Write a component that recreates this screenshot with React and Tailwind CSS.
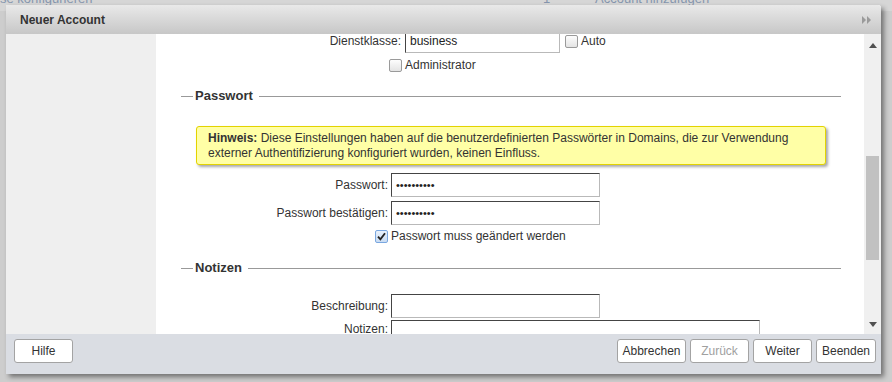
import React from "react";

const font = { fontFamily: '"Liberation Sans", Arial, sans-serif' };

function Box({ checked, className = "" }) {
  if (checked) {
    return (
      <span className={"inline-flex items-center justify-center w-[13px] h-[13px] rounded-[2px] border border-[#7aa7e0] bg-gradient-to-b from-[#e9f1fb] to-[#c9dcf3] shrink-0 " + className}>
        <svg width="9" height="9" viewBox="0 0 9 9">
          <path d="M1 4.6 L3.4 7.4 L8 1.2" stroke="#222" strokeWidth="1.8" fill="none" strokeLinejoin="miter" />
        </svg>
      </span>
    );
  }
  return (
    <span className={"inline-block w-[13px] h-[13px] rounded-[2px] border border-[#9a9a9a] bg-gradient-to-b from-[#fdfdfd] to-[#e4e4e4] shrink-0 " + className} />
  );
}

function Input({ w, children, h = "h-[24px]" }) {
  return (
    <div className={`${w} ${h} bg-white border border-t-[#444] border-l-[#444] border-b-[#b9b9b9] border-r-[#b9b9b9] flex items-center pl-[4px] text-[12px] text-[#222] shrink-0`}>
      {children}
    </div>
  );
}

function Legend({ title, className = "" }) {
  return (
    <div className={"flex items-center h-[16px] ml-[25px] mr-[23px] " + className}>
      <div className="w-[12px] h-px bg-[#999]" />
      <span className="ml-[2px] mr-[6px] text-[13px] font-bold text-[#333] leading-[16px]">{title}</span>
      <div className="flex-1 h-px bg-[#999]" />
    </div>
  );
}

function Btn({ children, w, disabled }) {
  return (
    <div className={`${w} h-[24px] rounded-[3px] border border-[#a3a3a3] bg-white flex items-center justify-center text-[12px] ${disabled ? "text-[#a0a0a0]" : "text-[#333]"}`}>
      {children}
    </div>
  );
}

export default function App() {
  const dots = "••••••••••";
  return (
    <div className="relative w-[892px] h-[382px] overflow-hidden bg-[#cdcdcd]" style={font}>
      {/* background page text */}
      <div className="flex h-[11px] pt-[0px] overflow-hidden bg-[#d6d6d6]">
        <div className="flex mt-[-9px] text-[13px] text-[#8595ad] leading-[15px] whitespace-nowrap">
          <span className="w-[543px]">se konfigurieren</span>
          <span className="w-[52px]">1</span>
          <span>Account hinzufügen</span>
        </div>
      </div>

      {/* dialog */}
      <div className="absolute left-[6px] top-[5px] w-[875px] h-[369px] flex flex-col bg-white shadow-[3px_3px_5px_rgba(0,0,0,0.45)] rounded-tr-[3px]">
        {/* header */}
        <div className="h-[29px] shrink-0 flex items-center justify-between bg-gradient-to-b from-[#e9e9e9] to-[#c7c7c7] rounded-tr-[3px]">
          <span className="ml-[14px] text-[12px] font-bold text-[#333]">Neuer Account</span>
          <svg width="10" height="8" viewBox="0 0 10 8" className="mr-[9px] mt-[1px]">
            <path d="M0 0 L4 4 L0 8 Z" fill="#9a9a9a" />
            <path d="M5 0 L9 4 L5 8 Z" fill="#9a9a9a" />
          </svg>
        </div>

        {/* body */}
        <div className="h-[300px] shrink-0 flex">
          <div className="w-[150px] bg-[#efefef] shrink-0" />
          <div className="w-[708px] overflow-hidden bg-white text-[12px] text-[#333]">
            <div className="mt-[-5px]">
              {/* Dienstklasse */}
              <div className="flex items-center h-[24px]">
                <div className="w-[245px] text-right">Dienstklasse:</div>
                <div className="ml-[4px]">
                  <Input w="w-[155px]">business</Input>
                </div>
                <Box className="ml-[5px]" />
                <span className="ml-[3px]">Auto</span>
              </div>
              {/* Administrator */}
              <div className="flex items-center h-[16px] mt-[4px] pl-[233px]">
                <Box />
                <span className="ml-[3px]">Administrator</span>
              </div>

              <Legend title="Passwort" className="mt-[15px]" />

              <div className="mt-[22px] ml-[40px] w-[630px] h-[39px] bg-[#ffffa6] border border-[#e3d300] rounded-[3px] shadow-[2px_2px_3px_rgba(0,0,0,0.35)] pl-[11px] pt-[4px] text-[12px] leading-[15px] text-[#333]">
                <b>Hinweis:</b> Diese Einstellungen haben auf die benutzerdefinierten Passwörter in Domains, die zur Verwendung
                <br />
                externer Authentifizierung konfiguriert wurden, keinen Einfluss.
              </div>

              <div className="flex items-center h-[24px] mt-[8px]">
                <div className="w-[232px] text-right">Passwort:</div>
                <div className="ml-[3px]">
                  <Input w="w-[209px]"><span className="text-[11px]">{dots}</span></Input>
                </div>
              </div>
              <div className="flex items-center h-[24px] mt-[4px]">
                <div className="w-[232px] text-right">Passwort bestätigen:</div>
                <div className="ml-[3px]">
                  <Input w="w-[209px]"><span className="text-[11px]">{dots}</span></Input>
                </div>
              </div>
              <div className="flex items-center h-[16px] mt-[3px] pl-[219px]">
                <Box checked />
                <span className="ml-[3px]">Passwort muss geändert werden</span>
              </div>

              <Legend title="Notizen" className="mt-[16px]" />

              <div className="flex items-center h-[24px] mt-[18px]">
                <div className="w-[232px] text-right">Beschreibung:</div>
                <div className="ml-[3px]">
                  <Input w="w-[209px]" />
                </div>
              </div>
              <div className="flex items-start mt-[2px]">
                <div className="w-[232px] text-right leading-[15px] mt-[2px]">Notizen:</div>
                <div className="ml-[3px]">
                  <Input w="w-[369px]" h="h-[50px]" />
                </div>
              </div>
            </div>
          </div>
          {/* scrollbar */}
          <div className="w-[17px] shrink-0 bg-[#f0f0f0] flex flex-col items-center">
            <svg width="8" height="5" viewBox="0 0 8 5" className="mt-[9px]">
              <path d="M0 5 L4 0 L8 5 Z" fill="#505050" />
            </svg>
            <div className="mt-[108px] w-[13px] h-[104px] bg-[#c1c1c1]" />
            <div className="flex-1" />
            <svg width="8" height="5" viewBox="0 0 8 5" className="mb-[7px]">
              <path d="M0 0 L8 0 L4 5 Z" fill="#505050" />
            </svg>
          </div>
        </div>

        {/* footer */}
        <div className="h-[40px] shrink-0 bg-[#dadde3] flex items-start pt-[5px] pl-[8px] pr-[5px]">
          <Btn w="w-[59px]">Hilfe</Btn>
          <div className="flex-1" />
          <div className="flex gap-[4px]">
            <Btn w="w-[69px]">Abbrechen</Btn>
            <Btn w="w-[59px]" disabled>Zurück</Btn>
            <Btn w="w-[59px]">Weiter</Btn>
            <Btn w="w-[60px]">Beenden</Btn>
          </div>
        </div>
      </div>
    </div>
  );
}
